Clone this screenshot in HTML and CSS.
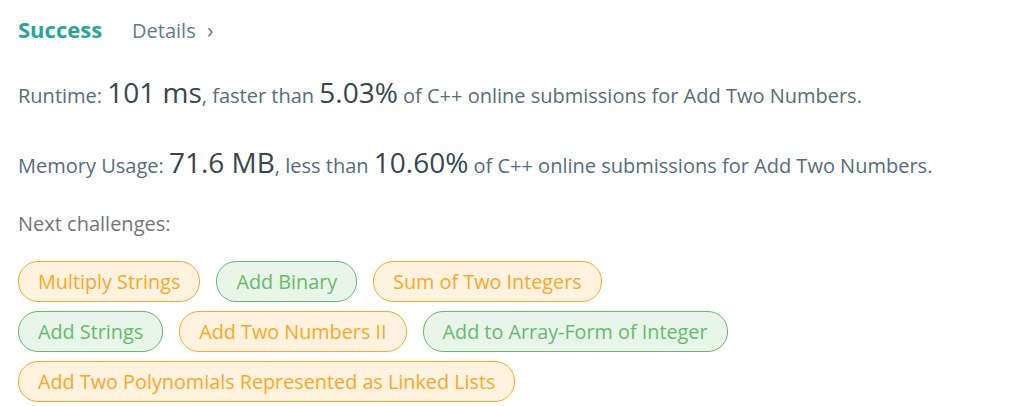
FILE: index.html
```html
<!DOCTYPE html>
<html lang="en">
<head>
    <meta charset="UTF-8">
    <meta name="viewport" content="width=device-width, initial-scale=1.0">
    <title>Submission Result</title>
    <link rel="stylesheet" href="styles.css">
</head>
<body>
    <div id="result">
        <div class="result-header">
            <span class="status">Success</span>
            <a class="details" href="#">Details <span class="chevron">&#8250;</span></a>
        </div>

        <p class="stat">Runtime: <span class="big">101 ms</span>, faster than <span class="big">5.03%</span> of C++ online submissions for Add Two Numbers.</p>
        <p class="stat">Memory Usage: <span class="big">71.6 MB</span>, less than <span class="big">10.60%</span> of C++ online submissions for Add Two Numbers.</p>

        <p class="next-title">Next challenges:</p>
        <div class="tags">
            <a class="tag medium" href="#">Multiply Strings</a>
            <a class="tag easy" href="#">Add Binary</a>
            <a class="tag medium" href="#">Sum of Two Integers</a>
            <a class="tag easy" href="#">Add Strings</a>
            <a class="tag medium" href="#">Add Two Numbers II</a>
            <a class="tag easy" href="#">Add to Array-Form of Integer</a>
            <a class="tag medium" href="#">Add Two Polynomials Represented as Linked Lists</a>
        </div>
    </div>
</body>
</html>
```

FILE: styles.css
```css
body {
    margin: 0;
    font-family: "Open Sans", "Noto Sans", sans-serif;
    background: #fff;
    color: #546e7a;
}

#result {
    padding: 14px 18px;
}

.result-header {
    display: flex;
    align-items: baseline;
    gap: 30px;
    height: 45px;
}

.status {
    font-size: 22px;
    font-weight: 700;
    color: #26a69a;
}

.details {
    font-size: 20px;
    color: #607d8b;
    text-decoration: none;
}

.chevron {
    margin-left: 6px;
    font-size: 22px;
}

.stat {
    margin: 0;
    font-size: 20px;
    line-height: 66px;
    color: #546e7a;
}

.stat .big {
    font-size: 28px;
    color: #37474f;
}

.next-title {
    margin: 0;
    font-size: 20px;
    line-height: 50px;
    color: #757575;
}

.tags {
    display: flex;
    flex-wrap: wrap;
    gap: 9px 16px;
    max-width: 730px;
    margin-top: 12px;
}

.tag {
    display: inline-block;
    padding: 0 19px;
    height: 39px;
    line-height: 39px;
    border-radius: 20px;
    font-size: 19.8px;
    text-decoration: none;
}

.tag.medium {
    color: #ffa726;
    background: #fff3e0;
    border: 1px solid #ffa726;
}

.tag.easy {
    color: #66bb6a;
    background: #e8f5e9;
    border: 1px solid #66bb6a;
}
```
